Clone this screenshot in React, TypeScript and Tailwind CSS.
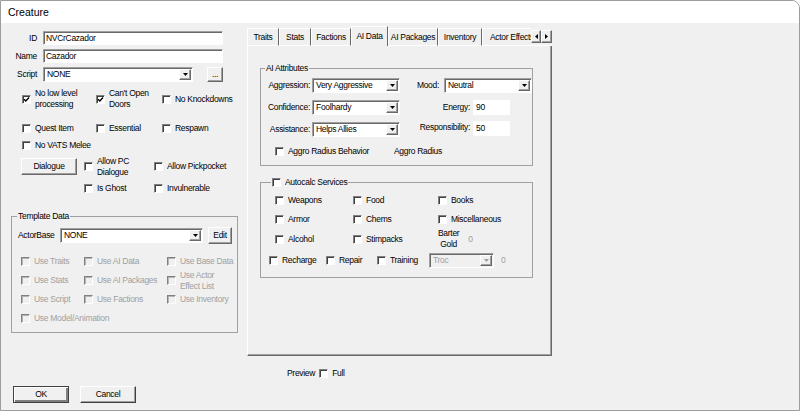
import type { ReactNode } from "react";

const sunken =
  "bg-white border border-t-[#a0a0a0] border-l-[#a0a0a0] border-b-white border-r-white shadow-[inset_1px_1px_0_#696969]";
const raised =
  "bg-[#f0f0f0] border border-t-white border-l-white border-b-[#696969] border-r-[#696969] shadow-[inset_-1px_-1px_0_#a0a0a0]";

function Box({ checked = false, disabled = false }: { checked?: boolean; disabled?: boolean }) {
  return (
    <span
      className={`w-[9px] h-[9px] shrink-0 flex items-center justify-center border border-t-[#808080] border-l-[#808080] border-b-white border-r-white ${
        disabled ? "bg-[#f0f0f0] shadow-[inset_1px_1px_0_#b4b4b4]" : "bg-white shadow-[inset_1px_1px_0_#404040]"
      }`}
    >
      {checked && (
        <svg width="7" height="7" viewBox="0 0 7 7">
          <path d="M1 3.2 L2.8 5 L6 1.6" fill="none" stroke="black" strokeWidth="1.4" />
        </svg>
      )}
    </span>
  );
}

function Check({
  children,
  checked,
  disabled,
}: {
  children: ReactNode;
  checked?: boolean;
  disabled?: boolean;
}) {
  return (
    <div className="flex items-center">
      <Box checked={checked} disabled={disabled} />
      <span className={`ml-[4px] whitespace-nowrap ${disabled ? "text-[#a0a0a0]" : ""}`}>{children}</span>
    </div>
  );
}

function Arrow({ dir, disabled }: { dir: "down" | "left" | "right"; disabled?: boolean }) {
  const fill = disabled ? "#a0a0a0" : "black";
  if (dir === "down")
    return (
      <svg width="5" height="3" viewBox="0 0 5 3">
        <path d="M0 0 H5 L2.5 3 Z" fill={fill} />
      </svg>
    );
  return (
    <svg width="3" height="5" viewBox="0 0 3 5">
      <path d={dir === "left" ? "M3 0 V5 L0 2.5 Z" : "M0 0 V5 L3 2.5 Z"} fill={fill} />
    </svg>
  );
}

function Combo({ w, value, disabled }: { w: string; value: string; disabled?: boolean }) {
  return (
    <div
      className={`${sunken} ${w} h-[15px] flex items-center ${
        disabled ? "!bg-[#f0f0f0] text-[#a0a0a0]" : ""
      }`}
    >
      <span className="flex-1 pl-[3px] whitespace-nowrap overflow-hidden">{value}</span>
      <span className={`${raised} w-[12px] h-[11px] mr-[1px] flex items-center justify-center`}>
        <Arrow dir="down" disabled={disabled} />
      </span>
    </div>
  );
}

const tabs: { label: string; w: string; active?: boolean }[] = [
  { label: "Traits", w: "w-[32px]" },
  { label: "Stats", w: "w-[32px]" },
  { label: "Factions", w: "w-[40px]" },
  { label: "AI Data", w: "w-[37px]", active: true },
  { label: "AI Packages", w: "w-[50px]" },
  { label: "Inventory", w: "w-[44px]" },
  { label: "Actor Effects", w: "w-[60px]" },
];

function LeftColumn() {
  return (
    <div className="w-[246px] shrink-0 flex flex-col">
      <div className="mt-[8px] flex items-center h-[14px]">
        <span className="w-[36px] text-right">ID</span>
        <div className={`${sunken} ml-[6px] w-[180px] h-[14px] pl-[2px] flex items-center`}>NVCrCazador</div>
      </div>
      <div className="mt-[4px] flex items-center h-[14px]">
        <span className="w-[36px] text-right">Name</span>
        <div className={`${sunken} ml-[6px] w-[180px] h-[14px] pl-[2px] flex items-center`}>Cazador</div>
      </div>
      <div className="mt-[4px] flex items-center h-[15px]">
        <span className="w-[36px] text-right">Script</span>
        <div className="ml-[6px]">
          <Combo w="w-[150px]" value="NONE" />
        </div>
        <button className={`${raised} ml-[14px] w-[16px] h-[15px] flex items-center justify-center leading-none`}>
          ...
        </button>
      </div>

      <div className="mt-[6px] h-[22px] pl-[21px] grid grid-cols-[74px_66px_1fr] items-center">
        <Check checked>
          No low level
          <br />
          processing
        </Check>
        <Check checked>
          Can't Open
          <br />
          Doors
        </Check>
        <Check>No Knockdowns</Check>
      </div>
      <div className="mt-[13px] h-[11px] pl-[21px] grid grid-cols-[74px_66px_1fr] items-center">
        <Check>Quest Item</Check>
        <Check>Essential</Check>
        <Check>Respawn</Check>
      </div>
      <div className="mt-[6px] h-[11px] pl-[21px] flex items-center">
        <Check>No VATS Melee</Check>
      </div>
      <div className="mt-[7px] h-[17px] pl-[20px] flex items-center">
        <button className={`${raised} w-[56px] h-[17px] flex items-center justify-center`}>Dialogue</button>
        <div className="ml-[7px] w-[70px]">
          <Check>
            Allow PC
            <br />
            Dialogue
          </Check>
        </div>
        <Check>Allow Pickpocket</Check>
      </div>
      <div className="mt-[8px] h-[11px] pl-[83px] grid grid-cols-[70px_1fr] items-center">
        <Check>Is Ghost</Check>
        <Check>Invulnerable</Check>
      </div>

      <fieldset className="mt-[17px] ml-[10px] w-[227px] border border-[#a0a0a0] pb-[4px]">
        <legend className="ml-[5px] px-[1px]">Template Data</legend>
        <div className="mt-[5px] h-[17px] pl-[6px] flex items-center">
          <span className="w-[41px]">ActorBase</span>
          <div className="ml-[1px]">
            <Combo w="w-[143px]" value="NONE" />
          </div>
          <button className={`${raised} ml-[5px] w-[24px] h-[17px] flex items-center justify-center`}>Edit</button>
        </div>
        <div className="mt-[8px] pl-[9px] grid grid-cols-[63px_83px_1fr] auto-rows-[19px] items-center">
          <Check disabled>Use Traits</Check>
          <Check disabled>Use AI Data</Check>
          <Check disabled>Use Base Data</Check>
          <Check disabled>Use Stats</Check>
          <Check disabled>Use AI Packages</Check>
          <Check disabled>
            Use Actor
            <br />
            Effect List
          </Check>
          <Check disabled>Use Script</Check>
          <Check disabled>Use Factions</Check>
          <Check disabled>Use Inventory</Check>
          <Check disabled>Use Model/Animation</Check>
        </div>
      </fieldset>

      <div className="mt-[53px] pl-[12px] flex">
        <button className="w-[56px] h-[17px] border border-[#404040] bg-[#f0f0f0] shadow-[inset_1px_1px_0_white,inset_-2px_-2px_0_#808080] flex items-center justify-center">
          OK
        </button>
        <button className="ml-[11px] w-[56px] h-[17px] border border-t-white border-l-white border-r-[#404040] border-b-[#404040] bg-[#f0f0f0] shadow-[inset_-1px_-1px_0_#a0a0a0] flex items-center justify-center">
          Cancel
        </button>
      </div>
    </div>
  );
}

function TabStrip() {
  return (
    <div className="flex h-[20px] items-end">
      <div className="flex-1 h-full flex items-end overflow-hidden">
        {tabs.map((t) =>
          t.active ? (
            <div
              key={t.label}
              className={`${t.w} shrink-0 h-[20px] bg-[#f0f0f0] border-t border-l border-r border-t-white border-l-white border-r-[#696969] flex items-center justify-center whitespace-nowrap pb-[1px]`}
            >
              {t.label}
            </div>
          ) : (
            <div
              key={t.label}
              className={`${t.w} shrink-0 h-[18px] border border-t-white border-l-white border-b-white border-r-[#696969] flex items-center justify-center whitespace-nowrap`}
            >
              {t.label}
            </div>
          )
        )}
      </div>
      <div className="w-[21px] h-full border-b border-b-white flex items-start pt-[4px]">
        <span className={`${raised} w-[10px] h-[13px] flex items-center justify-center`}>
          <Arrow dir="left" />
        </span>
        <span className={`${raised} w-[11px] h-[13px] flex items-center justify-center`}>
          <Arrow dir="right" />
        </span>
      </div>
    </div>
  );
}

function AiDataPanel() {
  return (
    <div className="h-[310px] border-l border-r border-b border-l-white border-r-[#696969] border-b-[#696969] shadow-[inset_-1px_-1px_0_#a0a0a0]">
      <fieldset className="mt-[17px] ml-[12px] w-[273px] border border-[#a0a0a0] pb-[8px]">
        <legend className="ml-[4px] px-[1px]">AI Attributes</legend>
        <div className="mt-[4px] h-[14px] flex items-center">
          <span className="w-[49px] text-right">Aggression:</span>
          <div className="ml-[2px]">
            <Combo w="w-[88px]" value="Very Aggressive" />
          </div>
          <span className="w-[39px] text-right">Mood:</span>
          <div className="ml-[5px]">
            <Combo w="w-[88px]" value="Neutral" />
          </div>
        </div>
        <div className="mt-[8px] h-[14px] flex items-center">
          <span className="w-[49px] text-right">Confidence:</span>
          <div className="ml-[2px]">
            <Combo w="w-[88px]" value="Foolhardy" />
          </div>
          <span className="w-[70px] text-right">Energy:</span>
          <div className="ml-[3px] w-[37px] h-[15px] bg-white pl-[3px] flex items-center">90</div>
        </div>
        <div className="mt-[8px] h-[14px] flex items-center">
          <span className="w-[49px] text-right">Assistance:</span>
          <div className="ml-[2px]">
            <Combo w="w-[88px]" value="Helps Allies" />
          </div>
          <span className="w-[70px] text-right -mt-[3px]">Responsibility:</span>
          <div className="ml-[3px] -mt-[2px] w-[37px] h-[15px] bg-white pl-[3px] flex items-center">50</div>
        </div>
        <div className="mt-[10px] h-[11px] pl-[14px] flex items-center">
          <div className="w-[119px]">
            <Check>Aggro Radius Behavior</Check>
          </div>
          <span>Aggro Radius</span>
        </div>
      </fieldset>

      <fieldset className="mt-[11px] ml-[12px] w-[273px] border border-[#a0a0a0] pb-[9px]">
        <legend className="ml-[10px] px-[1px]">
          <Check>Autocalc Services</Check>
        </legend>
        <div className="mt-[7px] h-[11px] pl-[14px] grid grid-cols-[78px_85px_1fr] items-center">
          <Check>Weapons</Check>
          <Check>Food</Check>
          <Check>Books</Check>
        </div>
        <div className="mt-[8px] h-[11px] pl-[14px] grid grid-cols-[78px_85px_1fr] items-center">
          <Check>Armor</Check>
          <Check>Chems</Check>
          <Check>Miscellaneous</Check>
        </div>
        <div className="mt-[3px] h-[22px] pl-[14px] grid grid-cols-[78px_85px_1fr] items-center">
          <Check>Alcohol</Check>
          <Check>Stimpacks</Check>
          <div className="flex items-center">
            <span className="text-center">
              Barter
              <br />
              Gold
            </span>
            <span className="ml-[9px] text-[#a0a0a0]">0</span>
          </div>
        </div>
        <div className="mt-[3px] h-[15px] pl-[8px] flex items-center">
          <div className="w-[57px]">
            <Check>Recharge</Check>
          </div>
          <div className="w-[51px]">
            <Check>Repair</Check>
          </div>
          <div className="w-[52px]">
            <Check>Training</Check>
          </div>
          <Combo w="w-[65px]" value="Troc" disabled />
          <span className="ml-[7px] text-[#a0a0a0]">0</span>
        </div>
      </fieldset>
    </div>
  );
}

export default function App() {
  return (
    <div className="w-[800px] h-[411px] overflow-hidden rounded-tr-[8px] border border-[#9c9c9c] bg-[#f0f0f0] flex flex-col font-['Liberation_Sans',Arial,sans-serif] text-[8.5px] tracking-[-0.3px] leading-[11px] text-black">
      <div className="h-[22px] shrink-0 bg-white flex items-center pl-[7px] text-[10.5px] tracking-normal">Creature</div>
      <div className="flex-1 flex">
        <LeftColumn />
        <div className="w-[305px] pt-[3px] flex flex-col">
          <TabStrip />
          <AiDataPanel />
          <div className="mt-[12px] h-[11px] pl-[40px] flex items-center">
            <span>Preview</span>
            <span className="ml-[4px]">
              <Box />
            </span>
            <span className="ml-[4px]">Full</span>
          </div>
        </div>
      </div>
    </div>
  );
}
